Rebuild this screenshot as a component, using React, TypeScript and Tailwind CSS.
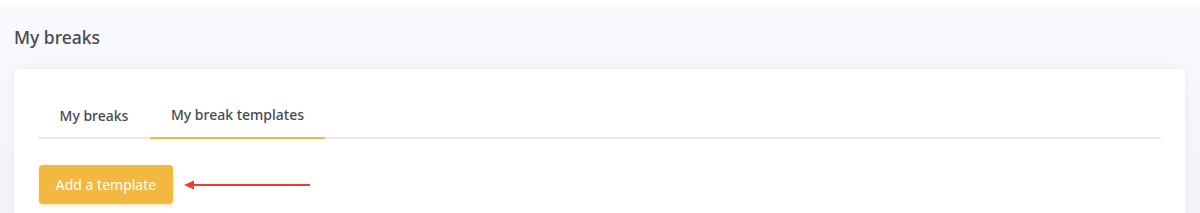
export default function App() {
    return (
        <div className="w-[1200px] h-[213px] overflow-hidden bg-white" style={{ fontFamily: '"Noto Sans", "Open Sans", sans-serif' }}>
            <div className="mt-[5px] h-[208px] bg-gradient-to-b from-[#f9fafd] to-[#f4f5f9] px-[14px] pt-[20px]">
                <h1 className="text-[17.5px] leading-[24px] text-[#464a52] font-medium">My breaks</h1>
                <div className="mt-[20px] w-[1171px] h-[200px] bg-white rounded-[6px] shadow-[0_0_12px_rgba(200,205,220,0.25)] px-[24px] pt-[24px]">
                    <div className="flex border-b-2 border-[#ebebeb] text-[14px] text-[#464a52] font-medium">
                        <div className="w-[112px] h-[44px] flex items-center justify-center">My breaks</div>
                        <div className="-mb-[2px] w-[175px] h-[46px] flex items-center justify-center border-b-2 border-[#f2b840] pb-[2px]">My break templates</div>
                    </div>
                    <div className="mt-[26px] flex items-center">
                        <button className="ml-[1px] w-[134px] h-[39px] rounded-[4px] bg-[#f2b840] text-white text-[14px] shadow-[0_2px_4px_rgba(242,184,64,0.35)]">
                            Add a template
                        </button>
                        <svg width="128" height="10" viewBox="0 0 128 10" className="ml-[11px]">
                            <line x1="8" y1="5" x2="126" y2="5" stroke="#e8412c" strokeWidth="2" />
                            <polygon points="0,5 10,0.5 10,9.5" fill="#e8412c" />
                        </svg>
                    </div>
                </div>
            </div>
        </div>
    );
}
